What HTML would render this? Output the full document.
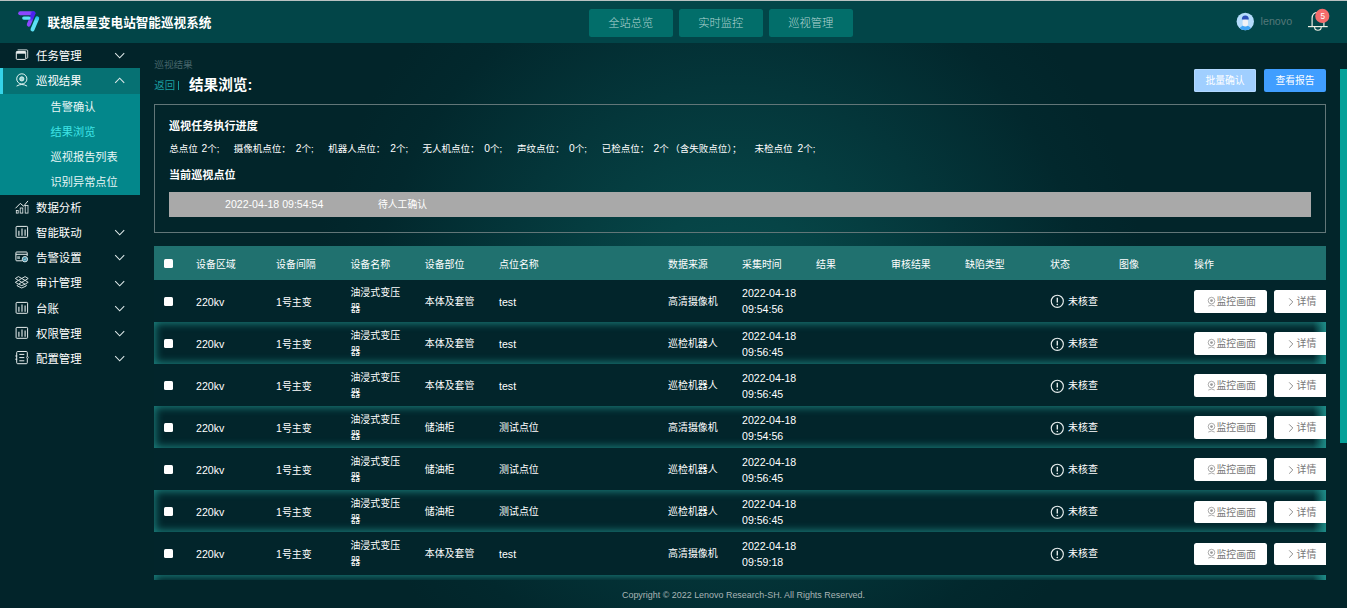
<!DOCTYPE html>
<html lang="zh-CN"><head><meta charset="utf-8"><title>联想晨星变电站智能巡视系统</title>
<style>
*{box-sizing:border-box;margin:0;padding:0}
html,body{width:1347px;height:608px;overflow:hidden;background:#02242a}
body{position:relative;font-family:"Liberation Sans","Noto Sans CJK SC",sans-serif;color:#fff;font-size:9.4px}
.abs{position:absolute}
#topline{left:0;top:0;width:1347px;height:1px;background:#b9c2c2}
#hdr{left:0;top:1px;width:1347px;height:42px;background:#024548}
#title{left:47.6px;top:12.7px;font-size:12.6px;font-weight:bold;line-height:18px;white-space:nowrap;letter-spacing:0}
.nav{top:8.3px;height:27.6px;width:83.6px;background:#026e6a;border-radius:2.5px;color:#b0d4d1;font-size:11.3px;line-height:28px;text-align:center;font-weight:300}
#user{left:1260.6px;top:12.3px;font-size:10.7px;line-height:16px;color:#557879}
#side{left:0;top:43px;width:140px;height:565px;background:#02242a}
.mi{position:absolute;left:0;width:140px;height:25.33px;line-height:27.6px;font-size:11.4px;color:#fff}
.mi.act{background:#067173;box-shadow:inset 3px 0 0 #35d4e8}
.mi .ico{position:absolute;left:0;top:0;width:40px;height:25.33px;overflow:visible}
.mi .mt{position:absolute;left:36px;top:0;white-space:nowrap}
.mi .chev{position:absolute;left:113.6px;top:9.2px;width:11.4px;height:7px}
.sub{position:absolute;left:0;width:140px;background:#03878b}
.si{position:absolute;left:50.6px;height:25.33px;line-height:26.6px;font-size:11.2px;color:#e8f6f6;white-space:nowrap}
.si.cur{color:#3fe4e6}
#main{left:140px;top:43px;width:1207px;height:565px;background:radial-gradient(circle 420px at 590px 275px,#074b4d 0%,#064446 25%,#04363a 55%,#02282d 85%,#02252a 100%)}
#crumb{left:154.3px;top:59px;font-size:9.6px;line-height:12px;color:#47656a}
#back{left:154.3px;top:79.2px;font-size:10.4px;line-height:14px;color:#1a9ea0;white-space:nowrap}
#ptitle{left:189px;top:75.4px;font-size:14.6px;line-height:20px;font-weight:bold;white-space:nowrap}
.tb{top:69px;height:23px;width:62px;border-radius:2px;color:#fff;font-size:9.8px;line-height:23.6px;text-align:center}
#panel{left:154px;top:104px;width:1172px;height:128.8px;border:1px solid #627678}
#panel .h{position:absolute;left:14px;font-size:11.1px;font-weight:bold;line-height:14px;white-space:nowrap}
#stats span{position:absolute;top:38.4px;font-size:9.5px;line-height:12px;white-space:pre}
#gbar{position:absolute;left:14px;top:87px;width:1142px;height:25px;background:#a9a9a9;font-size:9.8px;line-height:25.4px}
#tbl{left:154px;top:246.4px;width:1172px;height:334px;overflow:hidden}
#th{position:absolute;left:0;top:0;width:1172px;height:33.8px;background:#20716f}
.tr{position:absolute;left:0;width:1172px;height:42.05px;background:#02252b}
.tr.even::after{content:"";position:absolute;right:0;top:0;width:13px;height:42px;background:linear-gradient(90deg,rgba(31,143,138,0),rgba(31,143,138,.85))}
.tr.even{box-shadow:inset 0 0 8px 1px #1d8783}
.cb{position:absolute;left:10px;top:16.4px;width:9px;height:9px;background:#fff;border-radius:1.5px}
#th .cb{top:12.8px}
.c{position:absolute;top:0;height:42px;line-height:44.6px;white-space:nowrap;font-size:9.95px}
#th .c{height:33.8px;line-height:37px;font-size:9.95px}
.c.two{line-height:16px;top:5.3px}
.c.l,.l{font-size:10.6px}
.d{font-weight:normal;font-size:10.3px}
.c1{left:42px}.c2{left:122px}.c3{left:196.4px}.c4{left:270.7px}.c5{left:345px}.c6{left:514px}.c7{left:588px}.c8{left:662px}.c9{left:737px}.c9b{left:811px}.c10{left:896px}.c11{left:965px}.c12{left:1040px}
.warn{position:absolute;left:-0.3px;top:14.3px;width:14.6px;height:14.6px}
.st{position:absolute;left:18px;top:0}
.btn{position:absolute;top:10.1px;height:22.6px;background:#fff;border-radius:2.5px;color:#777;font-size:9.9px;line-height:23.4px;white-space:nowrap;z-index:2}
.b1{left:1040px;width:73px;padding-left:22.4px}
.b2{left:1120px;width:60px;padding-left:22.6px}
.cam{position:absolute;left:12px;top:5.5px;width:11px;height:11px}
.gt{position:absolute;left:13.800px;top:6.400px;width:6px;height:10px}
#foot{left:140px;top:580px;width:1207px;height:28px;text-align:center;font-size:8.95px;line-height:30px;color:#a9b5b5}
#sbar{left:1340px;top:69px;width:7px;height:374px;background:#05a198}
</style></head><body>
<div id="main" class="abs"></div>
<div id="topline" class="abs"></div>
<div id="hdr" class="abs">
<svg class="abs" style="left:0;top:-1px;width:60px;height:43px" viewBox="0 0 60 43">
<defs><linearGradient id="lg1" gradientUnits="userSpaceOnUse" x1="18" y1="0" x2="36" y2="0"><stop offset="0.65" stop-color="#8c46ff"/><stop offset="0.85" stop-color="#4a22f0"/></linearGradient>
<linearGradient id="lg2" gradientUnits="userSpaceOnUse" x1="0" y1="11" x2="0" y2="27"><stop offset="0.45" stop-color="#4a22f0"/><stop offset="0.65" stop-color="#8c46ff"/></linearGradient>
<linearGradient id="lg3" gradientUnits="userSpaceOnUse" x1="0" y1="16" x2="0" y2="32"><stop offset="0.1" stop-color="#25c2ea"/><stop offset="0.35" stop-color="#5ce1f5"/></linearGradient></defs>
<path d="M20.200 13.200H33.400" stroke="url(#lg1)" stroke-width="4" stroke-linecap="round"/>
<path d="M33.500 13.300L30.300 21 28.800 24.600" stroke="url(#lg2)" stroke-width="4" stroke-linecap="round" fill="none"/>
<path d="M23.800 18.100H29" stroke="#5ce1f5" stroke-width="3.300" stroke-linecap="round"/>
<path d="M37.200 18.400L34.500 24.800 32.500 29.500" stroke="url(#lg3)" stroke-width="4" stroke-linecap="round" fill="none"/>
</svg>
<div id="title" class="abs">联想晨星变电站智能巡视系统</div>
<div class="nav abs" style="left:589px">全站总览</div>
<div class="nav abs" style="left:679px">实时监控</div>
<div class="nav abs" style="left:769px">巡视管理</div>
<svg class="abs" style="left:1235px;top:10px;width:21px;height:21px" viewBox="0 0 21 21"><defs><clipPath id="avc"><circle cx="10.300" cy="10.500" r="8.700"/></clipPath></defs><circle cx="10.300" cy="10.500" r="8.700" fill="#b4dcfc"/><g clip-path="url(#avc)"><path d="M3.500 22Q3.500 14.500 10.300 14.500Q17.100 14.500 17.100 22Z" fill="#3fa4f4"/><rect x="7.600" y="8" width="5.400" height="7.600" rx="2.500" fill="#f0f2f6"/><path d="M6.800 8.400Q6.800 4.600 10.300 4.600Q13.800 4.600 13.800 8.400Z" fill="#2c4fb8"/></g></svg>
<div id="user" class="abs">lenovo</div>
<svg class="abs" style="left:1300px;top:-1px;width:40px;height:43px" viewBox="1300 0 40 43"><path d="M1308 26.600H1327.700" stroke="#f0f0e4" stroke-width="1.200"/><path d="M1312.100 26.600V18.500Q1312.100 12.300 1318 12.300Q1323.900 12.300 1323.900 18.500V26.600" fill="none" stroke="#f0f0e4" stroke-width="1.200"/><path d="M1314.600 27Q1314.600 30.300 1317.900 30.300Q1321.200 30.300 1321.200 27" fill="none" stroke="#f0f0e4" stroke-width="1.100"/><circle cx="1322.300" cy="15.900" r="7.100" fill="#f56c6c"/></svg>
<div class="abs" style="left:1317.700px;top:10.200px;width:10px;text-align:center;font-size:8.200px;line-height:11px;color:#fff">5</div>
</div>
<div id="side" class="abs">
<div class="mi" style="top:0.00px"><svg class="ico" viewBox="0 0 40 25.33"><rect x="16.300" y="8.500" width="9.400" height="7.900" rx="0.800" fill="none" stroke="#e9efef" stroke-width="1"/><path d="M16.300 9.600H25.700" stroke="#e9efef" stroke-width="2.200"/><path d="M17.600 6.900H26.800Q27.700 6.900 27.700 7.800V14.500Q27.700 15.300 26.800 15.300H26" fill="none" stroke="#e9efef" stroke-width="0.900"/></svg><span class="mt">任务管理</span><svg class="chev" viewBox="0 0 13 8.5"><path d="M1 1.5 L6.5 7 L12 1.5" fill="none" stroke="#dde8e8" stroke-width="1.3"/></svg></div>
<div class="mi act" style="top:25.27px"><svg class="ico" viewBox="0 0 40 25.33"><circle cx="21.800" cy="10.900" r="5.100" fill="none" stroke="#e6f6f4" stroke-width="1"/><circle cx="21.800" cy="10.900" r="2.100" fill="#9fd8d6" stroke="#e6f6f4" stroke-width="0.900"/><path d="M16.600 18.100Q21.800 14.900 27.100 18.100" fill="none" stroke="#e6f6f4" stroke-width="1"/></svg><span class="mt">巡视结果</span><svg class="chev" viewBox="0 0 13 8.5"><path d="M1 7 L6.5 1.5 L12 7" fill="none" stroke="#dde8e8" stroke-width="1.3"/></svg></div>
<div class="sub" style="top:50.54px;height:101.08px"><div class="si" style="top:0.00px">告警确认</div><div class="si cur" style="top:25.27px">结果浏览</div><div class="si" style="top:50.54px">巡视报告列表</div><div class="si" style="top:75.81px">识别异常点位</div></div>
<div class="mi" style="top:151.62px"><svg class="ico" viewBox="0 0 40 25.33"><path d="M15.500 13.300L20.300 8.400L23.600 11.200L28 5.900" fill="none" stroke="#e9efef" stroke-width="1"/><rect x="16.300" y="15.400" width="1.900" height="2.700" fill="none" stroke="#e9efef" stroke-width="0.800"/><rect x="20.200" y="13" width="2.600" height="5.100" fill="none" stroke="#e9efef" stroke-width="0.800"/><rect x="25.200" y="10.500" width="2.800" height="7.600" fill="none" stroke="#e9efef" stroke-width="0.800"/></svg><span class="mt">数据分析</span></div>
<div class="mi" style="top:176.89px"><svg class="ico" viewBox="0 0 40 25.33"><rect x="16.100" y="6.400" width="11.500" height="10.900" rx="0.800" fill="none" stroke="#e9efef" stroke-width="1"/><path d="M18.900 10.800V15.800M22 8.600V15.800M25.100 9.600V15.800" stroke="#e9efef" stroke-width="1.100"/></svg><span class="mt">智能联动</span><svg class="chev" viewBox="0 0 13 8.5"><path d="M1 1.5 L6.5 7 L12 1.5" fill="none" stroke="#dde8e8" stroke-width="1.3"/></svg></div>
<div class="mi" style="top:202.16px"><svg class="ico" viewBox="0 0 40 25.33"><path d="M22 15.800H16.700Q15.900 15.800 15.900 15V7.800Q15.900 7 16.700 7H26.400Q27.200 7 27.200 7.800V11" fill="none" stroke="#e9efef" stroke-width="1"/><path d="M15.900 9.300H27.200" stroke="#e9efef" stroke-width="1"/><rect x="17.200" y="11.200" width="2.800" height="2.800" fill="#8fa4a6"/><circle cx="24.900" cy="14.200" r="2.700" fill="#3f8fa8" stroke="#e9efef" stroke-width="0.900"/><path d="M23.800 14.200L24.700 15.100L26.100 13.300" fill="none" stroke="#e9efef" stroke-width="0.700"/></svg><span class="mt">告警设置</span><svg class="chev" viewBox="0 0 13 8.5"><path d="M1 1.5 L6.5 7 L12 1.5" fill="none" stroke="#dde8e8" stroke-width="1.3"/></svg></div>
<div class="mi" style="top:227.43px"><svg class="ico" viewBox="0 0 40 25.33"><path d="M18.400 6.600L21.750 8.500L18.400 10.400L15.300 8.500ZM25.100 6.600L28.200 8.500L25.100 10.400L21.750 8.500ZM18.400 10.400L21.750 12.300L18.400 14.200L15.300 12.300ZM25.100 10.400L28.200 12.300L25.100 14.200L21.750 12.300ZM17.300 14.800V16L21.750 18L26.200 16V14.800M18.400 14.200L21.750 15.600L25.100 14.200" fill="none" stroke="#e9efef" stroke-width="0.900" stroke-linejoin="round"/></svg><span class="mt">审计管理</span><svg class="chev" viewBox="0 0 13 8.5"><path d="M1 1.5 L6.5 7 L12 1.5" fill="none" stroke="#dde8e8" stroke-width="1.3"/></svg></div>
<div class="mi" style="top:252.70px"><svg class="ico" viewBox="0 0 40 25.33"><rect x="16.100" y="6.400" width="11.500" height="10.900" rx="0.800" fill="none" stroke="#e9efef" stroke-width="1"/><path d="M18.900 10.800V15.800M22 8.600V15.800M25.100 9.600V15.800" stroke="#e9efef" stroke-width="1.100"/></svg><span class="mt">台账</span><svg class="chev" viewBox="0 0 13 8.5"><path d="M1 1.5 L6.5 7 L12 1.5" fill="none" stroke="#dde8e8" stroke-width="1.3"/></svg></div>
<div class="mi" style="top:277.97px"><svg class="ico" viewBox="0 0 40 25.33"><rect x="16.100" y="6.400" width="11.500" height="10.900" rx="0.800" fill="none" stroke="#e9efef" stroke-width="1"/><path d="M18.900 10.800V15.800M22 8.600V15.800M25.100 9.600V15.800" stroke="#e9efef" stroke-width="1.100"/></svg><span class="mt">权限管理</span><svg class="chev" viewBox="0 0 13 8.5"><path d="M1 1.5 L6.5 7 L12 1.5" fill="none" stroke="#dde8e8" stroke-width="1.3"/></svg></div>
<div class="mi" style="top:303.24px"><svg class="ico" viewBox="0 0 40 25.33"><rect x="16.700" y="5.500" width="10.600" height="12.200" rx="1" fill="none" stroke="#e9efef" stroke-width="1"/><path d="M19.300 8.400H24.300M19.300 11.600H24.300M19.300 14.800H24.300" stroke="#e9efef" stroke-width="1"/><path d="M15.300 10H17.200M15.300 13.200H17.200" stroke="#e9efef" stroke-width="1"/><circle cx="27.500" cy="11.400" r="0.900" fill="#02242a" stroke="#e9efef" stroke-width="0.600"/></svg><span class="mt">配置管理</span><svg class="chev" viewBox="0 0 13 8.5"><path d="M1 1.5 L6.5 7 L12 1.5" fill="none" stroke="#dde8e8" stroke-width="1.3"/></svg></div>
</div>
<div id="crumb" class="abs">巡视结果</div>
<div id="back" class="abs">返回</div><div class="abs" style="left:178.400px;top:81px;width:1px;height:9.400px;background:#17999b"></div>
<div id="ptitle" class="abs">结果浏览:</div>
<div class="tb abs" style="left:1194px;background:#a0cfff;box-shadow:inset 0 0 0 1px #b3d8ff">批量确认</div>
<div class="tb abs" style="left:1264px;background:#409eff">查看报告</div>
<div id="panel" class="abs">
<div class="h" style="top:14px">巡视任务执行进度</div>
<div id="stats"><span style="left:14.3px">总点位</span><span style="left:46.6px"><b class="d">2</b>个;</span><span style="left:78.7px">摄像机点位：</span><span style="left:140.8px"><b class="d">2</b>个;</span><span style="left:173.3px">机器人点位：</span><span style="left:235.2px"><b class="d">2</b>个;</span><span style="left:267.5px">无人机点位：</span><span style="left:329.3px"><b class="d">0</b>个;</span><span style="left:362.0px">声纹点位：</span><span style="left:414.0px"><b class="d">0</b>个;</span><span style="left:446.8px">已检点位：</span><span style="left:498.6px"><b class="d">2</b>个</span><span style="left:515.3px">（含失败点位）；</span><span style="left:599.5px">未检点位</span><span style="left:642.4px"><b class="d">2</b>个;</span></div>
<div class="h" style="top:63px">当前巡视点位</div>
<div id="gbar"><span class="abs l" style="left:56px">2022-04-18 09:54:54</span><span class="abs" style="left:209px">待人工确认</span></div>
</div>
<div id="tbl" class="abs">
<div id="th"><span class="cb"></span><span class="c c1">设备区域</span><span class="c c2">设备间隔</span><span class="c c3">设备名称</span><span class="c c4">设备部位</span><span class="c c5">点位名称</span><span class="c c6">数据来源</span><span class="c c7">采集时间</span><span class="c c8">结果</span><span class="c c9">审核结果</span><span class="c c9b">缺陷类型</span><span class="c c10">状态</span><span class="c c11">图像</span><span class="c c12">操作</span></div>
<div class="tr" style="top:33.80px">
<span class="cb"></span>
<span class="c c1 l">220kv</span><span class="c c2"><span class="l">1</span>号主变</span><span class="c c3 two">油浸式变压<br>器</span>
<span class="c c4">本体及套管</span><span class="c c5 l">test</span><span class="c c6">高清摄像机</span>
<span class="c c7 two l">2022-04-18<br>09:54:56</span>
<span class="c c10"><svg class="warn" viewBox="0 0 14 14"><circle cx="7" cy="7" r="5.8" fill="none" stroke="#e8eeee" stroke-width="1.1"/><path d="M7 3.6V8.2" stroke="#e8eeee" stroke-width="1.3" fill="none"/><circle cx="7" cy="10.1" r="0.8" fill="#e8eeee"/></svg><span class="st">未核查</span></span>
<span class="btn b1"><svg class="cam" viewBox="0 0 12 12"><circle cx="6" cy="5" r="3.6" fill="none" stroke="#9a9a9a" stroke-width="0.9"/><circle cx="6" cy="5" r="1.5" fill="#9a9a9a"/><path d="M2.5 11 Q6 8.6 9.5 11" fill="none" stroke="#9a9a9a" stroke-width="0.9"/></svg>监控画面</span><span class="btn b2"><svg class="gt" viewBox="0 0 6 10"><path d="M1.200 1.400L4.800 5L1.200 8.600" fill="none" stroke="#808080" stroke-width="0.9"/></svg>详情</span>
</div>
<div class="tr even" style="top:75.85px">
<span class="cb"></span>
<span class="c c1 l">220kv</span><span class="c c2"><span class="l">1</span>号主变</span><span class="c c3 two">油浸式变压<br>器</span>
<span class="c c4">本体及套管</span><span class="c c5 l">test</span><span class="c c6">巡检机器人</span>
<span class="c c7 two l">2022-04-18<br>09:56:45</span>
<span class="c c10"><svg class="warn" viewBox="0 0 14 14"><circle cx="7" cy="7" r="5.8" fill="none" stroke="#e8eeee" stroke-width="1.1"/><path d="M7 3.6V8.2" stroke="#e8eeee" stroke-width="1.3" fill="none"/><circle cx="7" cy="10.1" r="0.8" fill="#e8eeee"/></svg><span class="st">未核查</span></span>
<span class="btn b1"><svg class="cam" viewBox="0 0 12 12"><circle cx="6" cy="5" r="3.6" fill="none" stroke="#9a9a9a" stroke-width="0.9"/><circle cx="6" cy="5" r="1.5" fill="#9a9a9a"/><path d="M2.5 11 Q6 8.6 9.5 11" fill="none" stroke="#9a9a9a" stroke-width="0.9"/></svg>监控画面</span><span class="btn b2"><svg class="gt" viewBox="0 0 6 10"><path d="M1.200 1.400L4.800 5L1.200 8.600" fill="none" stroke="#808080" stroke-width="0.9"/></svg>详情</span>
</div>
<div class="tr" style="top:117.90px">
<span class="cb"></span>
<span class="c c1 l">220kv</span><span class="c c2"><span class="l">1</span>号主变</span><span class="c c3 two">油浸式变压<br>器</span>
<span class="c c4">本体及套管</span><span class="c c5 l">test</span><span class="c c6">巡检机器人</span>
<span class="c c7 two l">2022-04-18<br>09:56:45</span>
<span class="c c10"><svg class="warn" viewBox="0 0 14 14"><circle cx="7" cy="7" r="5.8" fill="none" stroke="#e8eeee" stroke-width="1.1"/><path d="M7 3.6V8.2" stroke="#e8eeee" stroke-width="1.3" fill="none"/><circle cx="7" cy="10.1" r="0.8" fill="#e8eeee"/></svg><span class="st">未核查</span></span>
<span class="btn b1"><svg class="cam" viewBox="0 0 12 12"><circle cx="6" cy="5" r="3.6" fill="none" stroke="#9a9a9a" stroke-width="0.9"/><circle cx="6" cy="5" r="1.5" fill="#9a9a9a"/><path d="M2.5 11 Q6 8.6 9.5 11" fill="none" stroke="#9a9a9a" stroke-width="0.9"/></svg>监控画面</span><span class="btn b2"><svg class="gt" viewBox="0 0 6 10"><path d="M1.200 1.400L4.800 5L1.200 8.600" fill="none" stroke="#808080" stroke-width="0.9"/></svg>详情</span>
</div>
<div class="tr even" style="top:159.95px">
<span class="cb"></span>
<span class="c c1 l">220kv</span><span class="c c2"><span class="l">1</span>号主变</span><span class="c c3 two">油浸式变压<br>器</span>
<span class="c c4">储油柜</span><span class="c c5">测试点位</span><span class="c c6">高清摄像机</span>
<span class="c c7 two l">2022-04-18<br>09:54:56</span>
<span class="c c10"><svg class="warn" viewBox="0 0 14 14"><circle cx="7" cy="7" r="5.8" fill="none" stroke="#e8eeee" stroke-width="1.1"/><path d="M7 3.6V8.2" stroke="#e8eeee" stroke-width="1.3" fill="none"/><circle cx="7" cy="10.1" r="0.8" fill="#e8eeee"/></svg><span class="st">未核查</span></span>
<span class="btn b1"><svg class="cam" viewBox="0 0 12 12"><circle cx="6" cy="5" r="3.6" fill="none" stroke="#9a9a9a" stroke-width="0.9"/><circle cx="6" cy="5" r="1.5" fill="#9a9a9a"/><path d="M2.5 11 Q6 8.6 9.5 11" fill="none" stroke="#9a9a9a" stroke-width="0.9"/></svg>监控画面</span><span class="btn b2"><svg class="gt" viewBox="0 0 6 10"><path d="M1.200 1.400L4.800 5L1.200 8.600" fill="none" stroke="#808080" stroke-width="0.9"/></svg>详情</span>
</div>
<div class="tr" style="top:202.00px">
<span class="cb"></span>
<span class="c c1 l">220kv</span><span class="c c2"><span class="l">1</span>号主变</span><span class="c c3 two">油浸式变压<br>器</span>
<span class="c c4">储油柜</span><span class="c c5">测试点位</span><span class="c c6">巡检机器人</span>
<span class="c c7 two l">2022-04-18<br>09:56:45</span>
<span class="c c10"><svg class="warn" viewBox="0 0 14 14"><circle cx="7" cy="7" r="5.8" fill="none" stroke="#e8eeee" stroke-width="1.1"/><path d="M7 3.6V8.2" stroke="#e8eeee" stroke-width="1.3" fill="none"/><circle cx="7" cy="10.1" r="0.8" fill="#e8eeee"/></svg><span class="st">未核查</span></span>
<span class="btn b1"><svg class="cam" viewBox="0 0 12 12"><circle cx="6" cy="5" r="3.6" fill="none" stroke="#9a9a9a" stroke-width="0.9"/><circle cx="6" cy="5" r="1.5" fill="#9a9a9a"/><path d="M2.5 11 Q6 8.6 9.5 11" fill="none" stroke="#9a9a9a" stroke-width="0.9"/></svg>监控画面</span><span class="btn b2"><svg class="gt" viewBox="0 0 6 10"><path d="M1.200 1.400L4.800 5L1.200 8.600" fill="none" stroke="#808080" stroke-width="0.9"/></svg>详情</span>
</div>
<div class="tr even" style="top:244.05px">
<span class="cb"></span>
<span class="c c1 l">220kv</span><span class="c c2"><span class="l">1</span>号主变</span><span class="c c3 two">油浸式变压<br>器</span>
<span class="c c4">储油柜</span><span class="c c5">测试点位</span><span class="c c6">巡检机器人</span>
<span class="c c7 two l">2022-04-18<br>09:56:45</span>
<span class="c c10"><svg class="warn" viewBox="0 0 14 14"><circle cx="7" cy="7" r="5.8" fill="none" stroke="#e8eeee" stroke-width="1.1"/><path d="M7 3.6V8.2" stroke="#e8eeee" stroke-width="1.3" fill="none"/><circle cx="7" cy="10.1" r="0.8" fill="#e8eeee"/></svg><span class="st">未核查</span></span>
<span class="btn b1"><svg class="cam" viewBox="0 0 12 12"><circle cx="6" cy="5" r="3.6" fill="none" stroke="#9a9a9a" stroke-width="0.9"/><circle cx="6" cy="5" r="1.5" fill="#9a9a9a"/><path d="M2.5 11 Q6 8.6 9.5 11" fill="none" stroke="#9a9a9a" stroke-width="0.9"/></svg>监控画面</span><span class="btn b2"><svg class="gt" viewBox="0 0 6 10"><path d="M1.200 1.400L4.800 5L1.200 8.600" fill="none" stroke="#808080" stroke-width="0.9"/></svg>详情</span>
</div>
<div class="tr" style="top:286.10px">
<span class="cb"></span>
<span class="c c1 l">220kv</span><span class="c c2"><span class="l">1</span>号主变</span><span class="c c3 two">油浸式变压<br>器</span>
<span class="c c4">本体及套管</span><span class="c c5 l">test</span><span class="c c6">高清摄像机</span>
<span class="c c7 two l">2022-04-18<br>09:59:18</span>
<span class="c c10"><svg class="warn" viewBox="0 0 14 14"><circle cx="7" cy="7" r="5.8" fill="none" stroke="#e8eeee" stroke-width="1.1"/><path d="M7 3.6V8.2" stroke="#e8eeee" stroke-width="1.3" fill="none"/><circle cx="7" cy="10.1" r="0.8" fill="#e8eeee"/></svg><span class="st">未核查</span></span>
<span class="btn b1"><svg class="cam" viewBox="0 0 12 12"><circle cx="6" cy="5" r="3.6" fill="none" stroke="#9a9a9a" stroke-width="0.9"/><circle cx="6" cy="5" r="1.5" fill="#9a9a9a"/><path d="M2.5 11 Q6 8.6 9.5 11" fill="none" stroke="#9a9a9a" stroke-width="0.9"/></svg>监控画面</span><span class="btn b2"><svg class="gt" viewBox="0 0 6 10"><path d="M1.200 1.400L4.800 5L1.200 8.600" fill="none" stroke="#808080" stroke-width="0.9"/></svg>详情</span>
</div>
<div class="tr even" style="top:328.15px">
<span class="cb"></span>
<span class="c c1 l">220kv</span><span class="c c2"><span class="l">1</span>号主变</span><span class="c c3 two">油浸式变压<br>器</span>
<span class="c c4">本体及套管</span><span class="c c5 l">test</span><span class="c c6">巡检机器人</span>
<span class="c c7 two l">2022-04-18<br>09:59:18</span>
<span class="c c10"><svg class="warn" viewBox="0 0 14 14"><circle cx="7" cy="7" r="5.8" fill="none" stroke="#e8eeee" stroke-width="1.1"/><path d="M7 3.6V8.2" stroke="#e8eeee" stroke-width="1.3" fill="none"/><circle cx="7" cy="10.1" r="0.8" fill="#e8eeee"/></svg><span class="st">未核查</span></span>
<span class="btn b1"><svg class="cam" viewBox="0 0 12 12"><circle cx="6" cy="5" r="3.6" fill="none" stroke="#9a9a9a" stroke-width="0.9"/><circle cx="6" cy="5" r="1.5" fill="#9a9a9a"/><path d="M2.5 11 Q6 8.6 9.5 11" fill="none" stroke="#9a9a9a" stroke-width="0.9"/></svg>监控画面</span><span class="btn b2"><svg class="gt" viewBox="0 0 6 10"><path d="M1.200 1.400L4.800 5L1.200 8.600" fill="none" stroke="#808080" stroke-width="0.9"/></svg>详情</span>
</div>
</div>
<div id="foot" class="abs">Copyright © 2022 Lenovo Research-SH. All Rights Reserved.</div>
<div id="sbar" class="abs"></div>
</body></html>
